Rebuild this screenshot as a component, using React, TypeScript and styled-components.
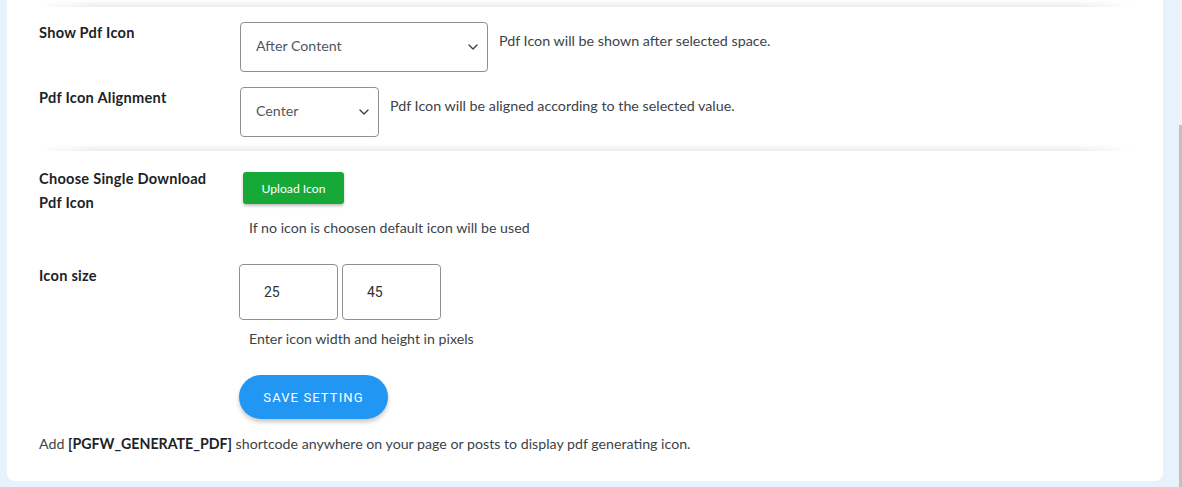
import React from 'react';
import styled, { createGlobalStyle } from 'styled-components';

const GlobalStyle = createGlobalStyle`
  html, body {
    margin: 0;
    padding: 0;
    background: #e7f2fd;
    overflow: hidden;
  }
  * {
    box-sizing: border-box;
  }
`;

const Page = styled.div`
  display: flex;
  height: 487px;
  padding-left: 7px;
  background: #e7f2fd;
  font-family: Lato, 'Noto Sans', sans-serif;
`;

const Card = styled.div`
  width: 1156px;
  height: 481px;
  background: #fff;
  border-radius: 0 0 8px 8px;
  padding: 0 30px 0 32px;
  display: flex;
  flex-direction: column;
`;

const Gutter = styled.div`
  width: 15px;
`;

const ScrollTrack = styled.div`
  width: 4px;
  background: #f1f1f1;
  display: flex;
  flex-direction: column;
`;

const ScrollThumb = styled.div`
  margin-top: 125px;
  margin-left: 1px;
  flex: 1;
  background: #c1c1c1;
`;

const Divider = styled.div`
  height: 7px;
  margin: 0 0 0 -2px;
  background: linear-gradient(to bottom, rgba(235, 235, 235, 0), #ebebeb);
  -webkit-mask-image: linear-gradient(to right, transparent, #000 60px, #000 calc(100% - 60px), transparent);
  mask-image: linear-gradient(to right, transparent, #000 60px, #000 calc(100% - 60px), transparent);
`;

const Section = styled.div<{ top: number; bottom: number }>`
  display: flex;
  flex-direction: column;
  padding-top: ${({ top }) => top}px;
  padding-bottom: ${({ bottom }) => bottom}px;
`;

const Row = styled.div<{ gap?: number }>`
  display: grid;
  grid-template-columns: 200px 1fr;
  margin-bottom: ${({ gap }) => gap ?? 0}px;
`;

const Label = styled.div<{ offset?: number }>`
  font-size: 14.6px;
  font-weight: 700;
  letter-spacing: 0.25px;
  line-height: 24px;
  color: #1d2327;
  margin-top: ${({ offset }) => offset ?? -1}px;
`;

const Field = styled.div`
  display: flex;
  align-items: flex-start;
`;

const FieldCol = styled.div`
  display: flex;
  flex-direction: column;
  align-items: flex-start;
`;

const SelectBox = styled.div<{ width: number }>`
  width: ${({ width }) => width}px;
  height: 50px;
  margin-left: 1px;
  border: 1px solid #8c8f94;
  border-radius: 4px;
  display: flex;
  align-items: center;
  justify-content: space-between;
  padding: 0 9px 0 15px;
  font-size: 14.2px;
  color: #50575e;
`;

const SelectValue = styled.span`
  margin-bottom: 4px;
`;

const Description = styled.div`
  font-size: 14.3px;
  line-height: 20px;
  color: #3c434a;
  padding: 9px 0 0 11px;
`;

const UploadButton = styled.button`
  margin: 6px 0 0 4px;
  width: 101px;
  height: 32px;
  border: none;
  border-radius: 3px;
  background: #17a937;
  color: #fff;
  font-family: Lato, 'Noto Sans', sans-serif;
  font-size: 12.2px;
  box-shadow: 0 2px 3px rgba(0, 0, 0, 0.25);
`;

const Helper = styled.div<{ top: number }>`
  margin-top: ${({ top }) => top}px;
  padding-left: 10px;
  font-size: 14.2px;
  line-height: 20px;
  color: #3c434a;
`;

const Inputs = styled.div`
  display: flex;
  gap: 4px;
  margin-top: 1px;
`;

const NumberInput = styled.div`
  width: 99px;
  height: 56px;
  border: 1px solid #8c8f94;
  border-radius: 4px;
  display: flex;
  align-items: center;
  padding-left: 24px;
  font-family: Roboto, 'Liberation Sans', sans-serif;
  font-size: 14px;
  color: #2c3338;
`;

const SaveButton = styled.button`
  margin: 26px 0 0 200px;
  width: 149px;
  height: 44px;
  border: none;
  border-radius: 22px;
  background: #2196f3;
  color: #fff;
  font-family: Roboto, 'Liberation Sans', sans-serif;
  font-size: 13px;
  letter-spacing: 1.1px;
  box-shadow: 0 3px 4px rgba(0, 0, 0, 0.22);
  align-self: flex-start;
`;

const Footer = styled.p`
  margin: 15px 0 0;
  font-size: 14.2px;
  line-height: 20px;
  color: #3c434a;
  b {
    color: #1d2327;
  }
`;

const Chevron = () => (
  <svg width="10" height="6" viewBox="0 0 10 6" fill="none">
    <path d="M1 1l4 4 4-4" stroke="#3c434a" strokeWidth="1.4" strokeLinecap="round" strokeLinejoin="round" />
  </svg>
);

const App = () => {
  return (
    <>
      <GlobalStyle />
      <Page>
        <Card>
          <Divider />
          <Section top={15} bottom={7}>
            <Row gap={15}>
              <Label>Show Pdf Icon</Label>
              <Field>
                <SelectBox width={248}>
                  <SelectValue>After Content</SelectValue>
                  <Chevron />
                </SelectBox>
                <Description>Pdf Icon will be shown after selected space.</Description>
              </Field>
            </Row>
            <Row>
              <Label>Pdf Icon Alignment</Label>
              <Field>
                <SelectBox width={139}>
                  <SelectValue>Center</SelectValue>
                  <Chevron />
                </SelectBox>
                <Description>Pdf Icon will be aligned according to the selected value.</Description>
              </Field>
            </Row>
          </Section>
          <Divider />
          <Section top={15} bottom={0}>
            <Row gap={25}>
              <Label offset={1}>
                Choose Single Download
                <br />
                Pdf Icon
              </Label>
              <FieldCol>
                <UploadButton>Upload Icon</UploadButton>
                <Helper top={14}>If no icon is choosen default icon will be used</Helper>
              </FieldCol>
            </Row>
            <Row>
              <Label offset={1}>Icon size</Label>
              <FieldCol>
                <Inputs>
                  <NumberInput>25</NumberInput>
                  <NumberInput>45</NumberInput>
                </Inputs>
                <Helper top={9}>Enter icon width and height in pixels</Helper>
              </FieldCol>
            </Row>
            <SaveButton>SAVE SETTING</SaveButton>
            <Footer>
              Add <b>[PGFW_GENERATE_PDF]</b> shortcode anywhere on your page or posts to display pdf generating icon.
            </Footer>
          </Section>
        </Card>
        <Gutter />
        <ScrollTrack>
          <ScrollThumb />
        </ScrollTrack>
      </Page>
    </>
  );
};

export default App;
